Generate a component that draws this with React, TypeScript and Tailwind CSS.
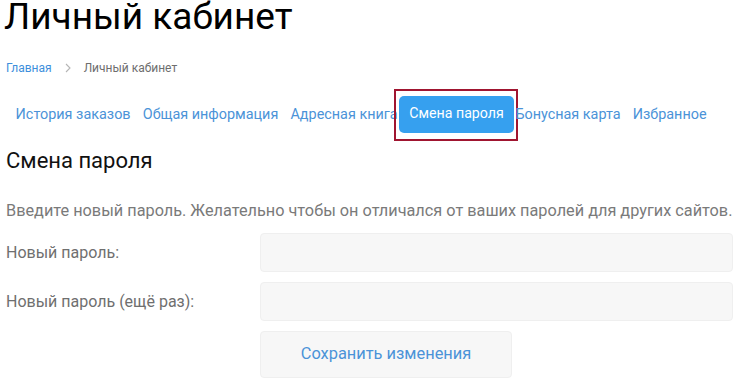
const tabs = [
  { label: 'История заказов' },
  { label: 'Общая информация' },
  { label: 'Адресная книга' },
  { label: 'Смена пароля', active: true },
  { label: 'Бонусная карта' },
  { label: 'Избранное' },
]

export default function App() {
  return (
    <div className="w-[740px] h-[386px] overflow-hidden bg-white px-[6px] font-['Roboto',sans-serif]">
      {/* Title */}
      <h1 className="-mt-[1px] -ml-[2px] text-[37px] leading-[36px] font-normal text-black whitespace-nowrap">
        Личный кабинет
      </h1>

      {/* Breadcrumbs */}
      <div className="mt-[24px] flex items-center h-[18px] text-[12px] leading-[18px]">
        <a className="text-[#3d8fdc]">Главная</a>
        <svg className="mx-[12px] w-[8px] h-[10px]" viewBox="0 0 8 10" fill="none">
          <path d="M2 1l4 4-4 4" stroke="#b5b5b5" strokeWidth="1.1" />
        </svg>
        <span className="text-[#6e6e6e]">Личный кабинет</span>
      </div>

      {/* Tabs */}
      <nav className="mt-[19px] flex items-center pl-[3.5px] h-[37px] whitespace-nowrap">
        {tabs.map((t) =>
          t.active ? (
            <span
              key={t.label}
              className="shrink-0 -ml-[10px] -mr-[9px] pl-[3px] pr-[2px] pt-[5px] pb-[6px] border-2 border-[#a01530] flex"
            >
              <span className="px-[10.5px] h-[37px] flex items-center rounded-[5px] bg-[#36a0ef] text-white text-[14.2px]">
                {t.label}
              </span>
            </span>
          ) : (
            <a key={t.label} className="shrink-0 px-[6.1px] text-[14.4px] text-[#4b93d8]">
              {t.label}
            </a>
          )
        )}
      </nav>

      {/* Section */}
      <h2 className="mt-[13px] text-[22px] leading-[30px] font-normal text-[#111]">Смена пароля</h2>

      <p className="mt-[23px] text-[16.3px] leading-[24px] text-[#7a7a7a] whitespace-nowrap">
        Введите новый пароль. Желательно чтобы он отличался от ваших паролей для других сайтов.
      </p>

      <form className="mt-[10px]">
        <div className="flex items-center h-[39px]">
          <label className="w-[254px] text-[16px] text-[#6f6f6f]">Новый пароль:</label>
          <input
            type="password"
            className="w-[473px] h-[39px] rounded-[4px] bg-[#f7f7f7] border border-[#efefef] outline-none"
          />
        </div>
        <div className="mt-[10px] flex items-center h-[39px]">
          <label className="w-[254px] text-[16px] text-[#6f6f6f]">Новый пароль (ещё раз):</label>
          <input
            type="password"
            className="w-[473px] h-[39px] rounded-[4px] bg-[#f7f7f7] border border-[#efefef] outline-none"
          />
        </div>
        <div className="mt-[10px] flex">
          <button
            type="button"
            className="ml-[254px] w-[252px] h-[47px] rounded-[4px] bg-[#f7f7f7] border border-[#efefef] text-[16.4px] text-[#4b93d8]"
          >
            Сохранить изменения
          </button>
        </div>
      </form>
    </div>
  )
}
